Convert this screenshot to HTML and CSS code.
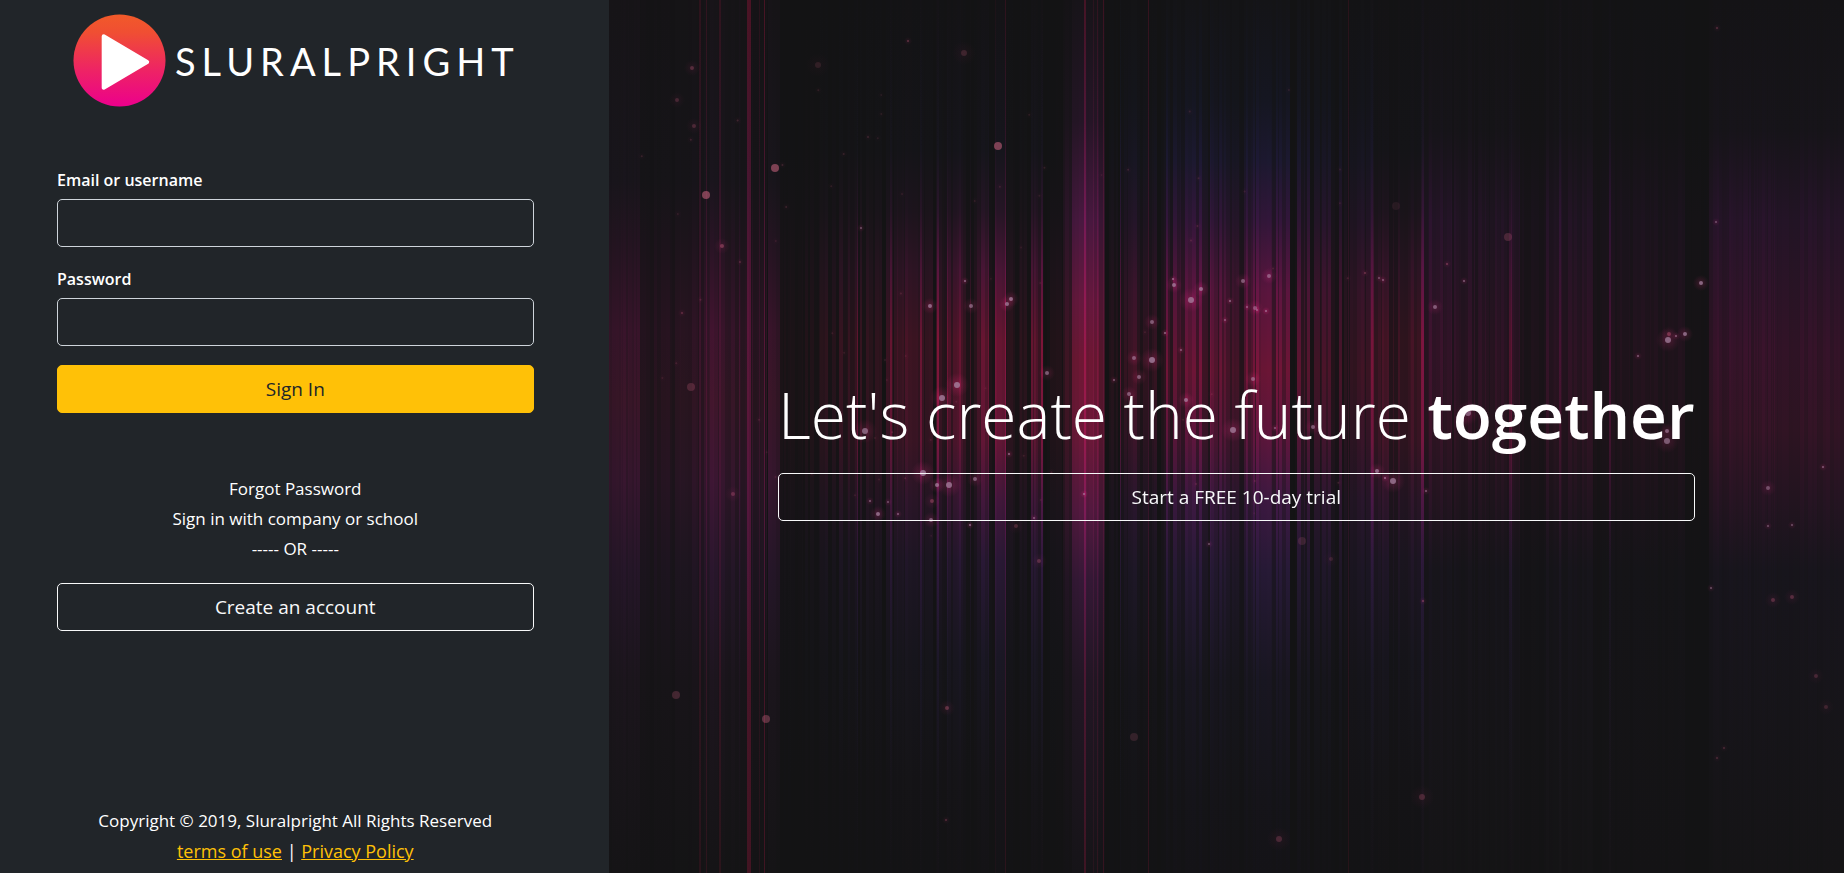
FILE: index.html
```html
<!DOCTYPE html>
<html lang="en">
<head>
<meta charset="utf-8">
<meta name="viewport" content="width=device-width, initial-scale=1">
<title>Sluralpright - Sign In</title>
<link rel="stylesheet" href="styles.css">
</head>
<body>
<div class="page">
  <main class="panel">
    <div class="logo">
      <svg class="logo-mark" viewBox="0 0 94 94" aria-hidden="true">
        <defs>
          <linearGradient id="mark" x1="0" y1="0" x2="0" y2="1">
            <stop offset="0" stop-color="#f15a29"/>
            <stop offset=".2" stop-color="#f04e33"/>
            <stop offset=".6" stop-color="#ee2464"/>
            <stop offset="1" stop-color="#ec008c"/>
          </linearGradient>
        </defs>
        <circle cx="47" cy="47" r="46.500" fill="url(#mark)"/>
        <path d="M31 22.500 L75 48.500 L31 74.500 Z" fill="#fff" stroke="#fff" stroke-width="4" stroke-linejoin="round"/>
      </svg>
      <span class="logo-name">SLURALPRIGHT</span>
    </div>
    <form class="form">
      <div class="field">
        <label class="label" for="user">Email or username</label>
        <input class="input" id="user" type="text">
      </div>
      <div class="field">
        <label class="label" for="pass">Password</label>
        <input class="input" id="pass" type="password">
      </div>
      <button class="button button-primary" type="submit">Sign In</button>
    </form>
    <div class="options">
      <div>Forgot Password</div>
      <div>Sign in with company or school</div>
      <div>----- OR -----</div>
    </div>
    <button class="button button-outline" type="button">Create an account</button>
    <footer class="footer">
      <div>Copyright © 2019, Sluralpright All Rights Reserved</div>
      <div class="legal"><a href="#">terms of use</a> | <a href="#">Privacy Policy</a></div>
    </footer>
  </main>
  <section class="hero">
    <canvas class="hero-art" id="art" width="1235" height="873"></canvas>
    <div class="hero-content">
      <h1 class="headline">Let's create the future <strong>together</strong></h1>
      <button class="button button-outline" type="button">Start a FREE 10-day trial</button>
    </div>
  </section>
</div>
<script src="art.js"></script>
</body>
</html>
```
FILE: styles.css
```css
*, *::before, *::after { box-sizing: border-box; }

body {
  margin: 0;
  background: #212529;
  color: #fff;
  font-family: "Open Sans", "Noto Sans", sans-serif;
  font-size: 17px;
  line-height: 30px;
}

.page {
  display: grid;
  grid-template-columns: 33% 1fr;
  min-height: 100vh;
}

.panel {
  display: flex;
  flex-direction: column;
  padding: 14px 75px 7px 57px;
}

.logo {
  display: flex;
  align-items: center;
  gap: 9px;
  padding-left: 16px;
  margin-bottom: 60px;
}

.logo-mark { width: 93px; height: 93px; flex: none; }

.logo-name {
  font-family: Lato, "Open Sans", sans-serif;
  font-size: 38px;
  letter-spacing: 6px;
}

.form { display: flex; flex-direction: column; }

.field {
  display: flex;
  flex-direction: column;
  gap: 5px;
  margin-bottom: 19px;
}

.label {
  font-size: 16px;
  font-weight: 600;
  line-height: 27px;
}

.input {
  width: 100%;
  height: 48px;
  padding: 8px 16px;
  border: 1px solid #ced4da;
  border-radius: 5px;
  background: transparent;
  color: #fff;
  font: inherit;
}

.button {
  width: 100%;
  padding: 8px 16px;
  border: 1px solid #f8f9fa;
  border-radius: 5px;
  background: transparent;
  color: #f8f9fa;
  font-family: inherit;
  font-size: 19px;
  line-height: 30px;
}

.button-primary {
  border-color: #ffc107;
  background: #ffc107;
  color: #212529;
}

.options {
  margin: 61px 0 19px;
  text-align: center;
}

.footer {
  margin-top: auto;
  text-align: center;
}

.legal { font-size: 18px; }
.legal a { color: #ffc107; }

.hero {
  display: grid;
  place-items: center;
  position: relative;
  overflow: hidden;
  padding: 21px 0 0 20px;
  background: #131314;
}

.hero-art {
  position: absolute;
  inset: 0;
  width: 100%;
  height: 100%;
}

.hero-content { position: relative; }

.headline {
  margin: 0 0 16px;
  font-size: 64px;
  font-weight: 300;
  line-height: 84px;
}

.headline strong { font-weight: 600; }
```
FILE: art.js
```js
const canvas = document.getElementById('art');
const ctx = canvas.getContext('2d');
const W = canvas.width, H = canvas.height, LEFT = 609;

let seed = 11;
function random() {
  seed = (seed * 16807) % 2147483647;
  return seed / 2147483647;
}

// Vertical colour profiles: [y, r, g, b], added over the dark base.
const profiles = {
  side: [[0, 4, 1, 4], [180, 6, 2, 8], [240, 18, 1, 14], [330, 40, 1, 24], [400, 42, 3, 22], [480, 38, 3, 28], [570, 20, 3, 22], [680, 9, 2, 9], [873, 2, 1, 2]],
  red: [[0, 1, 0, 2], [150, 3, 2, 8], [210, 18, 2, 17], [270, 52, 2, 32], [340, 82, 2, 28], [440, 78, 3, 32], [500, 46, 4, 38], [560, 22, 5, 32], [660, 7, 4, 16], [780, 3, 1, 5], [873, 1, 0, 2]],
  violet: [[0, 1, 1, 3], [100, 2, 3, 12], [160, 8, 5, 25], [220, 28, 3, 34], [290, 64, 2, 38], [370, 80, 2, 30], [440, 66, 3, 36], [500, 38, 5, 41], [570, 18, 6, 31], [680, 5, 3, 12], [800, 2, 1, 5], [873, 1, 0, 3]],
  plum: [[0, 1, 0, 2], [130, 4, 1, 6], [220, 20, 1, 22], [350, 36, 0, 22], [430, 34, 1, 18], [500, 20, 1, 15], [570, 5, 2, 9], [873, 2, 1, 2]],
  beam: [[0, 75, 0, 20], [200, 70, 3, 34], [380, 66, 3, 34], [520, 66, 3, 36], [680, 68, 2, 22], [873, 65, 2, 18]],
  core: [[0, 4, 1, 5], [120, 18, 2, 18], [220, 54, 5, 44], [300, 84, 5, 42], [360, 92, 4, 32], [430, 92, 5, 36], [510, 66, 6, 44], [580, 34, 5, 34], [680, 15, 3, 16], [873, 3, 1, 4]]
};

function column(x, w, name, strength) {
  const g = ctx.createLinearGradient(0, 0, 0, H);
  for (const [y, r, gr, b] of profiles[name]) {
    g.addColorStop(y / H, `rgb(${r * strength},${gr * strength},${b * strength})`);
  }
  ctx.fillStyle = g;
  ctx.fillRect(x - LEFT, 0, w, H);
}

ctx.fillStyle = '#131314';
ctx.fillRect(0, 0, W, H);
ctx.globalCompositeOperation = 'lighter';

// [from, to, profile, strength, variation]
const bands = [
  [609, 640, 'side', .85, .2], [640, 680, 'side', .4, .4], [680, 699, 'side', .5, .4],
  [699, 741, 'side', .8, .5], [741, 767, 'side', .6, .6], [768, 780, 'side', .85, .3],
  [780, 820, 'red', .1, 1], [820, 866, 'red', .24, .8], [866, 897, 'red', .26, 1],
  [897, 912, 'red', .5, .5], [912, 936, 'red', .28, .9], [936, 953, 'red', .45, .7],
  [953, 963, 'red', .8, .3], [963, 981, 'red', .35, .8], [981, 989, 'red', .9, .2],
  [989, 995, 'red', .12, .8], [995, 1006, 'red', 1, .15], [1006, 1031, 'red', .2, .9],
  [1031, 1043, 'red', .75, .4], [1043, 1063, 'red', .12, 1], [1063, 1072, 'core', .4, .4],
  [1072, 1099, 'core', .95, .08], [1099, 1105, 'core', .55, .3], [1105, 1120, 'violet', .12, 1],
  [1120, 1140, 'violet', .45, .7], [1140, 1164, 'violet', .26, .9], [1164, 1220, 'violet', .72, .75],
  [1220, 1246, 'violet', .66, .8], [1246, 1290, 'violet', .85, .6], [1290, 1297, 'violet', .06, 1],
  [1297, 1301, 'violet', .95, .1], [1301, 1347, 'violet', .45, .9], [1347, 1373, 'violet', .4, .7],
  [1373, 1422, 'red', .4, .7], [1422, 1452, 'plum', .9, .4], [1452, 1480, 'plum', .65, .6],
  [1480, 1520, 'plum', .65, .5], [1520, 1546, 'plum', .28, .4], [1546, 1593, 'plum', .65, .5],
  [1593, 1609, 'plum', .2, .5], [1609, 1658, 'plum', .35, .4], [1658, 1685, 'plum', .3, .5],
  [1685, 1709, 'plum', .08, .4], [1709, 1775, 'plum', .9, .25], [1775, 1844, 'plum', .85, .2]
];
for (const [from, to, name, strength, variation] of bands) {
  let x = from;
  while (x < to) {
    const w = Math.min(to - x, 1 + Math.floor(random() * 4));
    column(x, w, name, strength * (1 + (random() * 2 - 1) * variation));
    x += w;
  }
}

// Narrow beams: [x, width, profile, strength]
const beams = [
  [699, 2, 'beam', .32], [706, 1, 'beam', .35], [719, 2, 'beam', .35], [747, 4, 'beam', .7],
  [759, 1, 'beam', .25], [764, 1, 'beam', .65], [857, 1, 'red', .5], [890, 2, 'red', .6],
  [920, 2, 'red', .6], [937, 2, 'red', .8], [947, 1, 'red', .9], [995, 1, 'beam', .12],
  [1005, 1, 'beam', .35], [1041, 2, 'red', .6], [1084, 2, 'beam', .6], [1093, 1, 'beam', .25],
  [1097, 1, 'beam', .35], [1103, 1, 'beam', .5], [1120, 1, 'violet', .7], [1148, 1, 'beam', .45],
  [1348, 1, 'beam', .3], [1371, 3, 'red', .6], [1421, 3, 'red', .85], [1509, 3, 'red', .55],
  [1559, 2, 'plum', .6], [1609, 2, 'plum', 1.1]
];
for (const b of beams) column(...b);

// Sparks: [x, y, radius, alpha]
const sparks = [
  [775, 168, 4, .5], [706, 195, 4, .5], [998, 146, 4, .5], [964, 53, 3, .15], [818, 65, 3, .1], [908, 41, 1, .3],
  [692, 68, 2, .25], [677, 100, 2, .18], [694, 126, 2, .2], [722, 246, 2, .35], [691, 387, 4, .2], [861, 228, 1, .4],
  [682, 313, 1, .25], [740, 262, 1, .2], [930, 306, 2, .6], [965, 281, 1, .6], [971, 306, 2, .5], [1011, 299, 2, .6],
  [1007, 304, 2, .6], [957, 385, 3, .65], [942, 398, 3, .65], [865, 431, 3, .55], [1047, 373, 2, .5], [1173, 279, 1, .6],
  [1174, 285, 2, .6], [1201, 289, 2, .6], [1191, 300, 3, .6], [1152, 322, 2, .5], [1165, 333, 1, .6], [1181, 350, 1, .5],
  [1134, 358, 2, .5], [1152, 360, 3, .65], [1139, 377, 2, .5], [1186, 400, 2, .6], [1129, 394, 2, .5], [1114, 380, 1, .5],
  [1243, 281, 2, .5], [1269, 276, 2, .5], [1230, 301, 1, .6], [1247, 307, 1, .5], [1255, 308, 2, .4], [1257, 310, 1, .5],
  [1266, 311, 1, .6], [1225, 320, 1, .5], [1253, 379, 2, .5], [1365, 273, 1, .3], [1379, 278, 1, .4], [1383, 280, 1, .5],
  [1447, 264, 1, .35], [1464, 281, 1, .5], [1435, 307, 2, .5], [1508, 237, 4, .2], [1396, 206, 4, .06], [1701, 283, 2, .6],
  [1669, 334, 2, .3], [1676, 336, 1, .5], [1685, 334, 2, .6], [1668, 340, 3, .6], [1638, 356, 1, .5], [1716, 222, 1, .4],
  [1717, 28, 1, .25], [1468, 413, 3, .5], [1462, 421, 2, .5], [1667, 431, 2, .5], [1667, 441, 3, .5], [1233, 430, 3, .6],
  [1313, 427, 2, .5], [1275, 428, 1, .5], [1377, 471, 2, .6], [1385, 478, 1, .6], [1393, 481, 3, .6], [1426, 491, 1, .5],
  [923, 473, 3, .65], [937, 485, 2, .6], [949, 485, 3, .6], [975, 479, 2, .5], [1009, 454, 1, .6], [870, 501, 1, .5],
  [888, 502, 1, .4], [878, 514, 2, .6], [898, 514, 1, .5], [932, 501, 2, .3], [931, 520, 2, .5], [970, 525, 1, .6],
  [1016, 526, 2, .2], [1034, 518, 1, .5], [733, 494, 2, .25], [1084, 494, 1, .6], [1039, 561, 2, .25], [676, 695, 4, .2],
  [766, 719, 4, .33], [947, 708, 2, .3], [1134, 737, 4, .13], [1302, 541, 4, .14], [1279, 839, 3, .2], [1422, 797, 3, .2],
  [1768, 488, 2, .4], [1823, 467, 1, .5], [1768, 526, 1, .4], [1792, 525, 1, .4], [1711, 588, 1, .4], [1773, 600, 2, .25],
  [1792, 597, 2, .25], [1816, 676, 2, .18], [1826, 707, 2, .15], [1724, 748, 1, .2], [1717, 758, 1, .2], [1331, 559, 2, .12],
  [1423, 601, 1, .35], [1209, 544, 1, .4], [946, 820, 1, .25]
];
for (let i = 0; i < 70; i++) {
  sparks.push([620 + random() * 730, 90 + random() * 450, 1, .05 + random() * .1]);
}
for (const [x, y, r, a] of sparks) {
  const cx = x - LEFT;
  ctx.globalCompositeOperation = 'lighter';
  if (r < 4) {
    const glow = ctx.createRadialGradient(cx, y, 0, cx, y, r * 4);
    glow.addColorStop(0, `rgba(170,25,85,${a * .4})`);
    glow.addColorStop(1, 'rgba(170,25,85,0)');
    ctx.fillStyle = glow;
    ctx.fillRect(cx - r * 4, y - r * 4, r * 8, r * 8);
  }
  ctx.globalCompositeOperation = 'source-over';
  ctx.fillStyle = a > .35 && r < 4 ? `rgba(170,135,165,${a + .1})` : `rgba(215,105,135,${a + .03})`;
  ctx.beginPath();
  ctx.arc(cx, y, r, 0, Math.PI * 2);
  ctx.fill();
}
```
